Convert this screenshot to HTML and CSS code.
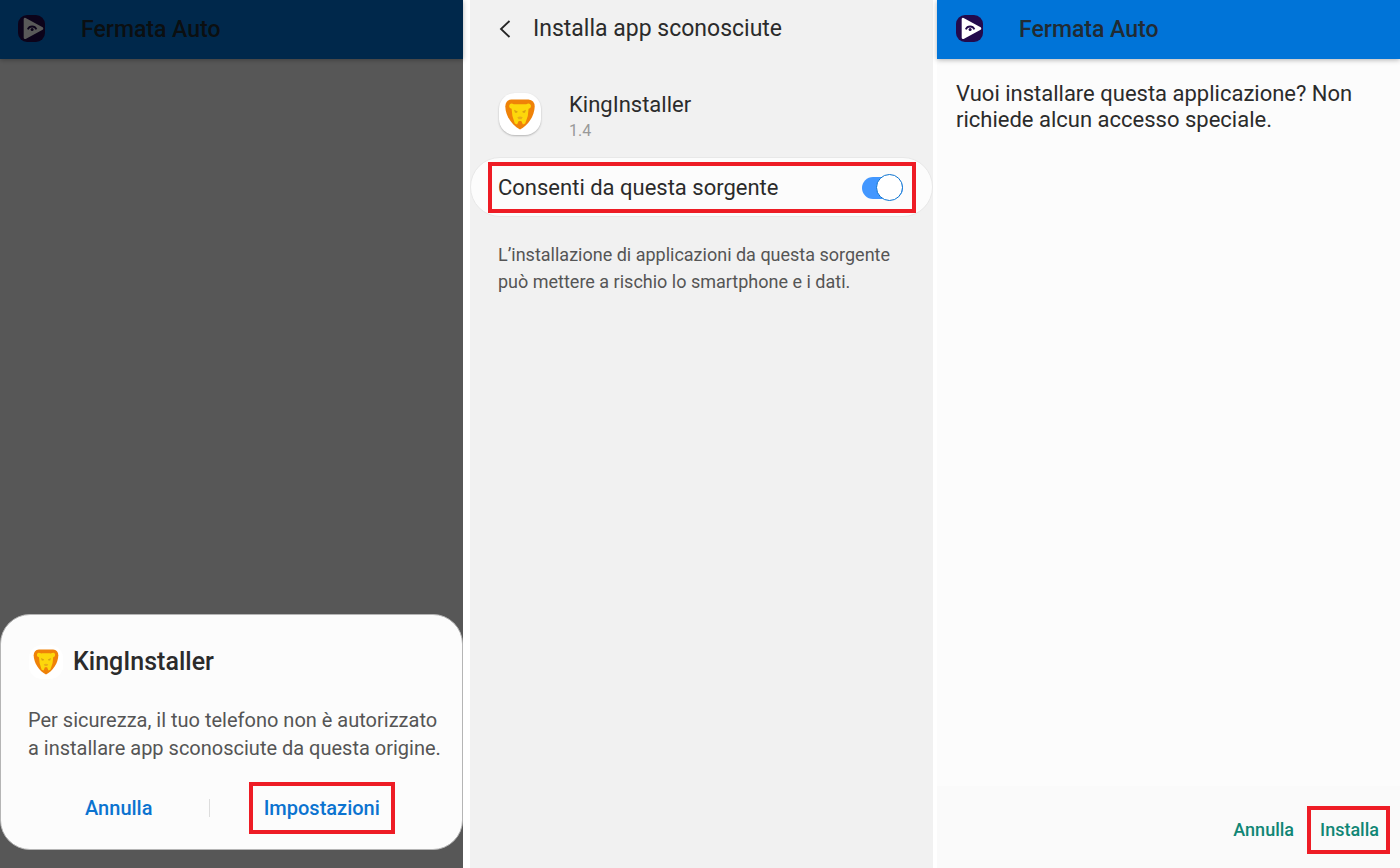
FILE: index.html
```html
<!DOCTYPE html>
<html lang="it">
<head>
<meta charset="utf-8">
<meta name="viewport" content="width=device-width, initial-scale=1">
<title>Fermata Auto</title>
<link rel="stylesheet" href="styles.css">
</head>
<body>
<svg class="defs" aria-hidden="true">
  <symbol id="fermata" viewBox="0 0 27 27">
    <rect width="27" height="27" rx="9" fill="#230a4c"/>
    <path d="M7 4.200V22.800L24 13.500Z" fill="#fff" stroke="#fff" stroke-width="2.600" stroke-linejoin="round"/>
    <path d="M9.800 14.300a4.700 4.700 0 0 1 8.600 0" fill="none" stroke="#230a4c" stroke-width="1.800"/>
    <circle cx="14.100" cy="14.600" r="1.500" fill="#230a4c"/>
  </symbol>
  <symbol id="lion" viewBox="0 0 30 31">
    <path d="M6.500 .5h17Q29.500 1 29.700 7.500C29.500 17 23 26.500 15 30.500C7 26.500 .5 17 .3 7.500Q.5 1 6.500 .5Z" fill="#ef8208"/>
    <path d="M4.300 6.200Q5 4 7.600 4.700Q9.200 5.400 10.500 5.200h9Q20.800 5.400 22.400 4.700Q25 4 25.900 6.200Q26.400 9 23.600 9.700L22.800 17L20.200 24.600L17.900 25.500L16.300 21.900H13.700L12.100 25.500L9.800 24.600L7.400 17L6.600 9.700Q3.600 9 4.300 6.200Z" fill="#fdd70b"/>
    <path d="M9 10.800l3.800 1.600-.8 1.300H10ZM21 10.800l-3.800 1.600.8 1.300h2Z" fill="#d9a313"/>
    <path d="M12.300 18.300Q15 16.900 17.700 18.300L16.500 20.200h-3Z" fill="#e8ae18"/>
  </symbol>
</svg>
<main class="screens">
  <section class="screen screen-dimmed">
    <header class="appbar">
      <svg class="appbar-icon" aria-hidden="true"><use href="#fermata"/></svg>
      <h2 class="appbar-title">Fermata Auto</h2>
    </header>
    <div class="scrim">
      <div class="dialog" role="dialog" aria-labelledby="dialog-title">
        <div class="dialog-head">
          <span class="tile tile-small"><svg class="lion-small" aria-hidden="true"><use href="#lion"/></svg></span>
          <h2 class="dialog-title" id="dialog-title">KingInstaller</h2>
        </div>
        <p class="dialog-text">Per sicurezza, il tuo telefono non è autorizzato a installare app sconosciute da questa origine.</p>
        <div class="dialog-actions">
          <button class="action action-blue" type="button">Annulla</button>
          <span class="divider"></span>
          <button class="action action-blue marked" type="button">Impostazioni</button>
        </div>
      </div>
    </div>
  </section>

  <section class="screen screen-settings">
    <header class="settings-bar">
      <button class="back" type="button" aria-label="Indietro">
        <svg class="back-icon" viewBox="0 0 12 18" aria-hidden="true"><path d="M10.500 1L2 9l8.500 8" fill="none" stroke="#252525" stroke-width="1.800"/></svg>
      </button>
      <h1 class="settings-title">Installa app sconosciute</h1>
    </header>
    <div class="app">
      <span class="tile tile-large"><svg class="lion-large" aria-hidden="true"><use href="#lion"/></svg></span>
      <div>
        <h2 class="app-name">KingInstaller</h2>
        <p class="app-version">1.4</p>
      </div>
    </div>
    <div class="pill">
      <label class="allow">
        <span>Consenti da questa sorgente</span>
        <input class="switch" type="checkbox" role="switch" checked>
      </label>
    </div>
    <p class="warning">L’installazione di applicazioni da questa sorgente può mettere a rischio lo smartphone e i dati.</p>
  </section>

  <section class="screen screen-install">
    <header class="appbar">
      <svg class="appbar-icon" aria-hidden="true"><use href="#fermata"/></svg>
      <h2 class="appbar-title">Fermata Auto</h2>
    </header>
    <p class="question">Vuoi installare questa applicazione? Non richiede alcun accesso speciale.</p>
    <footer class="install-actions">
      <button class="action action-green" type="button">Annulla</button>
      <button class="action action-green marked" type="button">Installa</button>
    </footer>
  </section>
</main>
</body>
</html>
```
FILE: styles.css
```css
* { box-sizing: border-box; }

body {
  margin: 0;
  background: #fff;
  color: #2b2b2b;
  font-family: Roboto, "Liberation Sans", sans-serif;
}

h1, h2, p { margin: 0; font-weight: 400; }

button {
  border: 0;
  padding: 0;
  background: none;
  font: inherit;
  cursor: pointer;
}

.defs { position: absolute; width: 0; height: 0; }

.screens { display: flex; min-height: 100vh; }

.screen {
  display: flex;
  flex: 1 1 0;
  flex-direction: column;
  min-width: 0;
}

.screen-dimmed {
  position: relative;
  margin-right: 7px;
  background: #fafafa;
}

.screen-settings { background: #f1f1f1; }

.screen-install { margin-left: 4px; background: #fcfcfc; }

.appbar {
  display: flex;
  align-items: center;
  gap: 36px;
  height: 59px;
  padding: 0 18px 3px;
  background: #0074d8;
  box-shadow: 0 1px 5px rgba(0, 0, 0, 0.3);
}

.screen-install .appbar { padding-left: 19px; }

.appbar-icon { width: 27px; height: 27px; }

.appbar-title {
  padding-top: 4px;
  color: #212b33;
  font-size: 23px;
  font-weight: 500;
  line-height: 28px;
}

.scrim {
  position: absolute;
  inset: 0;
  display: flex;
  flex-direction: column;
  justify-content: flex-end;
  padding-bottom: 18px;
  background: rgba(0, 0, 0, 0.65);
}

.dialog {
  padding: 29px 28px 15px;
  border: 1px solid #b5b5b5;
  border-radius: 30px;
  background: #fcfcfc;
}

.dialog-head { display: flex; align-items: center; gap: 10px; }

.dialog-title { font-size: 25px; font-weight: 500; line-height: 36px; }

.dialog-text {
  margin: 26px -10px 0 -1px;
  color: #555;
  font-size: 20px;
  line-height: 28px;
}

.dialog-actions {
  display: grid;
  grid-template-columns: 4fr 1px 5fr;
  align-items: center;
  justify-items: center;
  margin-top: 20px;
}

.divider { width: 1px; height: 18px; background: #ddd; }

.tile {
  display: flex;
  flex: none;
  align-items: center;
  justify-content: center;
  background: #fff;
}

.tile-small { width: 34px; height: 34px; border-radius: 13px; }

.tile-large {
  width: 42px;
  height: 42px;
  margin-top: 2px;
  border-radius: 16px;
  box-shadow: 0 1px 2px rgba(0, 0, 0, 0.25);
}

.lion-small { width: 26px; height: 26px; }
.lion-large { width: 30px; height: 31px; }

.action { font-weight: 500; line-height: 24px; }
.action-blue { color: #0b73d0; font-size: 20px; }
.action-green { color: #108675; font-size: 18px; }

.marked { padding: 10px 11px; border: 4px solid #ee1c25; }

.settings-bar {
  display: flex;
  align-items: center;
  gap: 20px;
  padding: 15px 28px 0 29px;
}

.back { display: flex; width: 14px; height: 28px; align-items: center; }
.back-icon { width: 12px; height: 18px; }
.settings-title { font-size: 23px; line-height: 28px; }

.app {
  display: flex;
  align-items: flex-start;
  gap: 28px;
  padding: 48px 28px 14px 29px;
}

.app-name { font-size: 22px; line-height: 28px; }
.app-version { color: #999; font-size: 16px; line-height: 24px; }

.pill {
  padding: 4px 16px 3px 17px;
  border: 1px solid #e8e8e8;
  border-radius: 30px;
  background: #fcfcfc;
}

.allow {
  display: flex;
  align-items: center;
  justify-content: space-between;
  padding: 8px 9px 8px 6px;
  border: 4px solid #ee1c25;
  font-size: 22px;
  line-height: 27px;
}

.switch {
  display: flex;
  align-items: center;
  justify-content: flex-end;
  width: 41px;
  height: 22px;
  margin: 0;
  border-radius: 11px;
  background: #4297ff;
  appearance: none;
}

.switch::before {
  flex: none;
  width: 25px;
  height: 25px;
  border: 1px solid #0b73d0;
  border-radius: 50%;
  background: #fff;
  content: "";
}

.switch:not(:checked) { justify-content: flex-start; background: #bbb; }

.warning {
  padding: 24px 28px;
  color: #555;
  font-size: 18px;
  line-height: 27px;
}

.question { padding: 22px 19px; font-size: 22px; line-height: 26px; }

.install-actions {
  display: flex;
  align-items: center;
  justify-content: flex-end;
  gap: 13px;
  margin-top: auto;
  padding: 20px 10px 14px;
  background: #fafafa;
}

.install-actions .marked { padding: 8px 7px 8px 9px; }
```
